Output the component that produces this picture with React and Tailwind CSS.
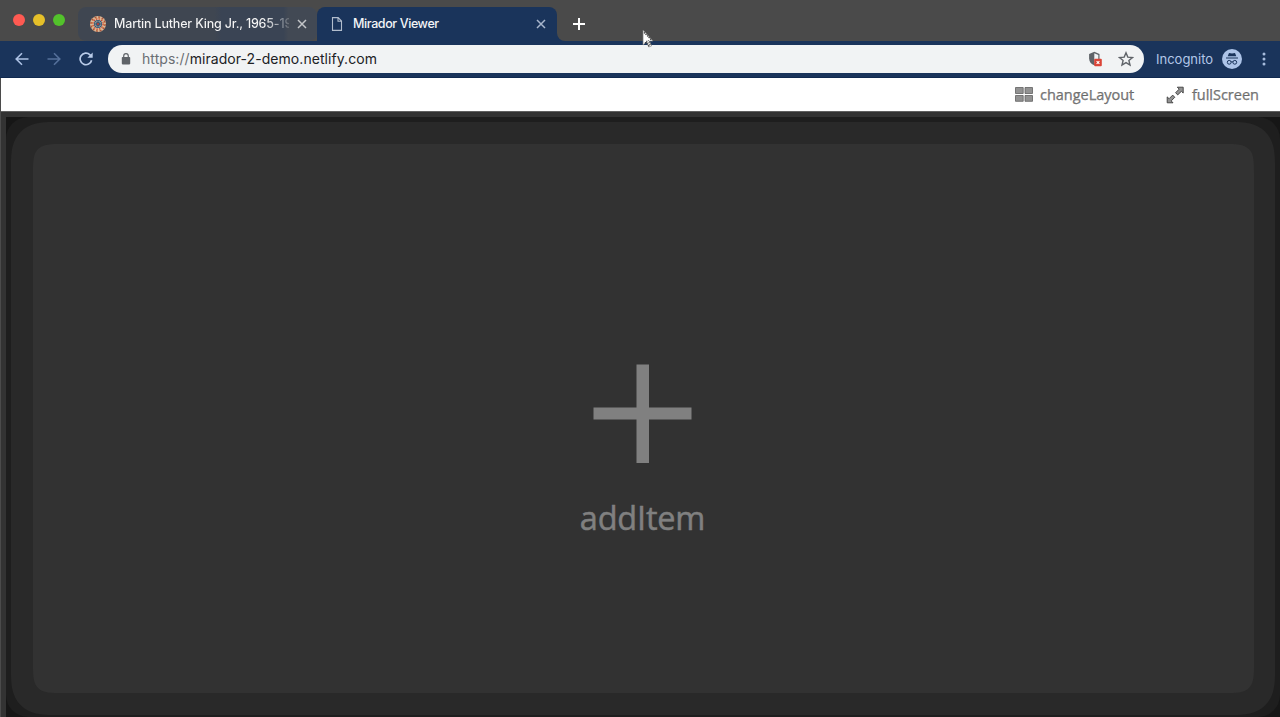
import React from "react";

function CloseIcon({ className }) {
  return (
    <svg viewBox="0 0 10 10" className={`h-[10px] w-[10px] shrink-0 ${className}`} fill="none" stroke="currentColor" strokeWidth="1.5">
      <path d="M1 1l8 8M9 1l-8 8" />
    </svg>
  );
}

const petals = Array.from({ length: 12 }, (_, i) => i * 30);

function MosaicIcon() {
  return (
    <svg viewBox="0 0 16 16" className="h-4 w-4 shrink-0">
      <circle cx="8" cy="8" r="8" fill="#dcb997" />
      <circle cx="8" cy="8" r="7" fill="none" stroke="#a8553f" strokeWidth="1.6" strokeDasharray="1.9 1.765" />
      <circle cx="8" cy="8" r="5.2" fill="none" stroke="#c4473a" strokeWidth="1.5" strokeDasharray="1.4 1.32" />
      <circle cx="8" cy="8" r="6.1" fill="none" stroke="#e8a24a" strokeWidth=".8" strokeDasharray="1.2 2" />
      <circle cx="8" cy="8" r="4" fill="#2f5a78" />
      {petals.map((a) => (
        <rect key={a} x="7.6" y="4.8" width=".8" height="1.1" fill="#b9a99f" transform={`rotate(${a} 8 8)`} />
      ))}
      <circle cx="8" cy="8" r="1.3" fill="#a8443a" />
    </svg>
  );
}

function TabStrip() {
  return (
    <header className="relative flex h-[41px] bg-[#4a4a4a] pt-[7px] font-['Inter','Liberation_Sans',sans-serif]">
      <div className="flex w-[78px] gap-2 pl-[13px] pt-[7px]">
        <span className="h-3 w-3 rounded-full bg-[#ff5a52]" />
        <span className="h-3 w-3 rounded-full bg-[#e6c029]" />
        <span className="h-3 w-3 rounded-full bg-[#53c22b]" />
      </div>
      <div className="flex h-[34px] w-[239px] items-center rounded-[8px] bg-[linear-gradient(90deg,#3f4651_0%,#3f4651_57%,#3a4454_60%,#3a4454_86%,#424954_88%)] pl-3 pr-[10px]">
        <MosaicIcon />
        <span className="ml-2 w-[175px] whitespace-nowrap bg-[linear-gradient(90deg,#f5f5f5_86%,#f5f5f530_100%)] bg-clip-text text-[12.5px] font-medium leading-5 tracking-[-0.18px] text-transparent">
          Martin Luther King Jr., 1965-19
        </span>
        <CloseIcon className="ml-auto text-[#c3c5c8]" />
      </div>
      <div className="relative flex h-[34px] w-[240px] items-center rounded-t-[8px] bg-[#1a345b] pl-[14px] pr-[11px]">
        <svg viewBox="0 0 12 14" className="h-[14px] w-3 shrink-0" fill="none" stroke="#b2bdcd" strokeWidth="1.1">
          <path d="M1.5.6h5.7L10.5 4v9.400h-9zM7 .8v3.500h3.500" />
        </svg>
        <span className="ml-[10px] text-[12.5px] font-medium leading-5 tracking-[-0.4px] text-[#f3f5f7]">Mirador Viewer</span>
        <CloseIcon className="ml-auto text-[#a8b6cc]" />
        <svg viewBox="0 0 8 8" className="absolute -right-2 bottom-0 h-2 w-2" fill="#1a345b"><path d="M0 0a8 8 0 0 0 8 8H0z" /></svg>
      </div>
      <svg viewBox="0 0 12 12" className="ml-4 mt-[11px] h-3 w-3" stroke="#fff" strokeWidth="2">
        <path d="M6 0v12M0 6h12" />
      </svg>
      <svg viewBox="0 0 12 19" className="absolute left-[642px] top-[29px] z-10 h-[19px] w-3">
        <path d="M1 1v15l3.500-3 2.300 5 2.800-1.200L7.400 12H11z" fill="#fff" stroke="#777" strokeWidth=".7" />
        <path d="M2 3.500l7 7.100M3 14.200l1.700-1.700 2 4.200 1.500-.8-2-4.700" fill="none" stroke="#222" strokeWidth="1.100" strokeDasharray="1.200 1" />
      </svg>
    </header>
  );
}

function AddressBar() {
  return (
    <nav className="flex h-[37px] items-start border-b border-[#10294f] bg-[#1a345b] pl-[15px] pt-1 font-['Inter','Liberation_Sans',sans-serif]">
      <svg viewBox="0 0 14 14" className="mt-[7px] h-[14px] w-[14px]" fill="none" stroke="#adc2e5" strokeWidth="1.6">
        <path d="M13.5 7H1.5M7 1.2L1.2 7 7 12.8" />
      </svg>
      <svg viewBox="0 0 14 14" className="ml-[18px] mt-[7px] h-[14px] w-[14px]" fill="none" stroke="#55709a" strokeWidth="1.6">
        <path d="M.5 7h12M7 1.2L12.8 7 7 12.8" />
      </svg>
      <svg viewBox="0 0 14 14" className="ml-[18px] mt-[7px] h-[14px] w-[14px]" fill="none" stroke="#b9cbe8" strokeWidth="1.7">
        <path d="M12.600 8.200A5.800 5.800 0 1 1 11 2.800l1.400 1.500" />
        <path d="M13.700.5v5.300H8.400z" fill="#b9cbe8" stroke="none" />
      </svg>
      <div className="ml-[15px] flex h-7 w-[1036px] items-center rounded-full bg-[#f1f3f4] pl-[13px] pr-[10px]">
        <svg viewBox="0 0 10 12" className="h-3 w-[10px]">
          <rect x=".8" y="4" width="8.4" height="7.4" rx=".8" fill="#5f6368" />
          <path d="M2.700 4.500V3a2.300 2.300 0 0 1 4.600 0v1.500" fill="none" stroke="#5f6368" strokeWidth="1.2" />
        </svg>
        <span className="ml-[11px] text-[14px] leading-5 tracking-[0.06px] text-[#202124]"><span className="text-[#6a6e73]">https://</span>mirador-2-demo.netlify.com</span>
        <svg viewBox="0 0 15 16" className="ml-auto h-4 w-[15px]">
          <path d="M6.300.800l5.200 2.200v4.500c0 3.300-2.100 5.600-5.200 6.700-3.100-1.100-5.200-3.400-5.200-6.700V3z" fill="#5f6368" />
          <path d="M6.300 2.300l4 1.700v3.800c0 2.200-1.700 4-4 5z" fill="#f1f3f4" />
          <rect x="6.200" y="7.700" width="7.600" height="7.600" rx="1" fill="#db4437" />
          <path d="M8.600 10.100l2.800 2.800m0-2.800l-2.800 2.800" stroke="#fff" strokeWidth="1.100" />
        </svg>
        <svg viewBox="0 0 16 16" className="ml-[15px] h-4 w-4" fill="none" stroke="#5f6368" strokeWidth="1.400">
          <path d="M8 1.800l1.800 4.300 4.700.4-3.600 3 1.100 4.600L8 11.600l-4 2.500 1.100-4.600-3.600-3 4.700-.4z" />
        </svg>
      </div>
      <span className="ml-3 mt-1 w-[58px] whitespace-nowrap text-[13px] leading-5 text-[#b3c7e8]">Incognito</span>
      <svg viewBox="0 0 20 20" className="ml-2 mt-1 h-5 w-5">
        <circle cx="10" cy="10" r="10" fill="#adc4e8" />
        <path d="M7 4l3 .6 3-.6 1.300 3.300H5.700zM4 8.400h12v1.200H4z" fill="#1a345b" />
        <g fill="none" stroke="#1a345b" strokeWidth="1">
          <circle cx="7.200" cy="13.300" r="1.900" /><circle cx="12.800" cy="13.300" r="1.900" /><path d="M9.100 13q.9-.6 1.800 0" />
        </g>
      </svg>
      <svg viewBox="0 0 4 14" className="ml-5 mt-[7px] h-[14px] w-1" fill="#a6bbdc">
        <circle cx="2" cy="2" r="1.500" /><circle cx="2" cy="7" r="1.500" /><circle cx="2" cy="12" r="1.500" />
      </svg>
    </nav>
  );
}

function ViewerMenu() {
  return (
    <div className="flex h-[33px] bg-white pl-[1013px] font-['Open_Sans',sans-serif] text-[14.500px] leading-5 text-[#808080]">
      <svg viewBox="0 0 20 16" className="mt-2 h-4 w-5">
        <g fill="#929292" stroke="#606060" strokeWidth=".8">
          <path d="M1.500 1.500h7.700v6h-7.700zM11 1.500h7.500v6h-7.500zM1.500 9.500h7.700v5.800h-7.700zM11 9.500h7.500v5.800h-7.500z" />
        </g>
      </svg>
      <span className="ml-[6px] mt-[7px] w-[96px] whitespace-nowrap tracking-[-0.02px] [-webkit-text-stroke:0.25px_#505050]">changeLayout</span>
      <svg viewBox="0 0 18 18" className="ml-[30px] mt-2 h-[18px] w-[18px]" fill="#929292" stroke="#3c3c3c" strokeWidth=".9" strokeLinejoin="round">
        <path d="M11.300 1.200h5.900v5.900l-1.800-1.800-3.700 3.600-2.100-2.200 3.600-3.600zM6.700 9.100l2.100 2.200-3.600 3.600 1.800 1.900H1.200v-5.900l1.900 1.800z" />
      </svg>
      <span className="ml-[8px] mt-[7px] whitespace-nowrap tracking-[-0.02px] [-webkit-text-stroke:0.25px_#505050]">fullScreen</span>
    </div>
  );
}

function EmptySlot() {
  return (
    <main className="flex min-h-0 flex-1 border-t border-[#606060] bg-[#333] pl-[5px] pt-[5px]">
      <div className="flex flex-1 bg-[#161616]">
        <div className="flex flex-1 rounded-[22px] bg-[#1e1e1e] pb-[2px] pl-[5px] pr-[5px] pt-[5px]">
          <div className="flex flex-1 rounded-[42px] bg-[#292929] [corner-shape:superellipse(1.400)] pb-[22px] pl-[22px] pr-[21px] pt-[22px]">
            <div className="flex flex-1 flex-col items-center rounded-[30px] bg-[#323232] [corner-shape:superellipse(1.900)] pr-[2px] pt-[220px] text-[#808080]">
              <svg viewBox="0 0 99 99" className="h-[99px] w-[99px]" fill="currentColor">
                <path d="M43.500.500H56v43h42.500v12H56v43.500H43.500V55.500H.500v-12h43z" />
              </svg>
              <span className="mt-[32px] font-['Open_Sans',sans-serif] text-[32.500px] leading-[46px] tracking-[-0.200px] [-webkit-text-stroke:0.5px_#808080]">addItem</span>
            </div>
          </div>
        </div>
      </div>
    </main>
  );
}

export default function App() {
  return (
    <div className="flex h-[717px] w-[1280px] flex-col overflow-hidden bg-[#4a4a4a]">
      <TabStrip />
      <AddressBar />
      <div className="flex min-h-0 flex-1 flex-col border-l border-[#4b4b4b]">
        <ViewerMenu />
        <EmptySlot />
      </div>
    </div>
  );
}
